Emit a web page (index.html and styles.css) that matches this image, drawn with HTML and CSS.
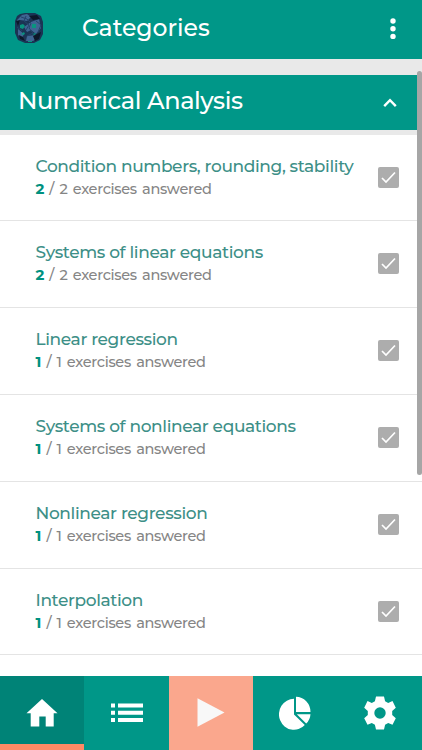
FILE: index.html
```html
<!DOCTYPE html>
<html lang="en">
  <head>
    <meta charset="UTF-8" />
    <meta name="viewport" content="width=device-width, initial-scale=1.0" />
    <title>Categories</title>
    <link rel="stylesheet" href="styles.css">
  </head>
  <body>
    <header class="topbar">
      <svg class="logo" viewBox="0 0 30 32">
        <path d="M6 2 L11 1 H21 L27 4 L29 10 V22 L26 28 L20 31 H11 L4 28 L1 21 V9 L3 4 Z" fill="#1b3454" />
        <path d="M8 3 L13 2 L17 5 L13 9 L6 8 L3 12 L3 8 Z M17 10 L25 7 L27 16 L22 22 L17 18 L13 20 L10 15 Z M4 17 L10 22 L8 26 L4 23 Z M13 24 L22 23 L24 26 L19 29 H12 Z" fill="#3f6592" />
        <path d="M15 4 L23 3 L26 7 L19 8 Z M5 23 L9 25 L11 29 L6 27 Z M19 24 L27 20 L25 27 L21 29 Z M2 9 L6 8 L4 14 Z" fill="#0c1829" />
        <path d="M6 13 L9 12 L11 14 L9 17 L6 16 Z M18 12 H22 V16 H18 Z M7 22 L10 20 L11 22 L9 23 Z M18 22 L22 21 L21 23 Z M14 29 H18 V30 H14 Z" fill="#08947f" />
        <path d="M7 5 L13 7 L17 11 L15 16 L19 21 L13 24 M12 4 L10 9 L15 13 L12 18 M3 15 L8 19 M22 9 L27 13 L24 20" fill="none" stroke="#24436a" stroke-width="1" />
      </svg>
      <h1>Categories</h1>
      <svg class="more" viewBox="0 0 6 22">
        <circle cx="3" cy="3" r="2.7" />
        <circle cx="3" cy="10.7" r="2.7" />
        <circle cx="3" cy="18.4" r="2.7" />
      </svg>
    </header>

    <main class="content">
      <div class="group-header">
        <h2>Numerical Analysis</h2>
        <svg class="chevron" viewBox="0 0 14 10">
          <path d="M1.2 8.2 L7 2.2 L12.8 8.2" />
        </svg>
      </div>
      <ul class="list">
        <li class="row">
          <div>
            <h3>Condition numbers, rounding, stability</h3>
            <p><b>2</b> / 2 exercises answered</p>
          </div>
          <svg class="check" viewBox="0 0 21 21"><path d="M4 11 L8 15 L17 5.5" /></svg>
        </li>
        <li class="row">
          <div>
            <h3>Systems of linear equations</h3>
            <p><b>2</b> / 2 exercises answered</p>
          </div>
          <svg class="check" viewBox="0 0 21 21"><path d="M4 11 L8 15 L17 5.5" /></svg>
        </li>
        <li class="row">
          <div>
            <h3>Linear regression</h3>
            <p><b>1</b> / 1 exercises answered</p>
          </div>
          <svg class="check" viewBox="0 0 21 21"><path d="M4 11 L8 15 L17 5.5" /></svg>
        </li>
        <li class="row">
          <div>
            <h3>Systems of nonlinear equations</h3>
            <p><b>1</b> / 1 exercises answered</p>
          </div>
          <svg class="check" viewBox="0 0 21 21"><path d="M4 11 L8 15 L17 5.5" /></svg>
        </li>
        <li class="row">
          <div>
            <h3>Nonlinear regression</h3>
            <p><b>1</b> / 1 exercises answered</p>
          </div>
          <svg class="check" viewBox="0 0 21 21"><path d="M4 11 L8 15 L17 5.5" /></svg>
        </li>
        <li class="row">
          <div>
            <h3>Interpolation</h3>
            <p><b>1</b> / 1 exercises answered</p>
          </div>
          <svg class="check" viewBox="0 0 21 21"><path d="M4 11 L8 15 L17 5.5" /></svg>
        </li>
      </ul>
      <div class="scrollbar"></div>
    </main>

    <nav class="tabs">
      <a class="tab active">
        <svg viewBox="0 0 32 34"><path d="M16 3 L31.5 17.2 H27.7 V30.5 H19.7 V20.5 H13.3 V30.5 H4.7 V17.2 H.5 Z" /></svg>
      </a>
      <a class="tab">
        <svg viewBox="0 0 32 34"><path d="M0 7.5h4v4H0z M7 7.5h25v4H7z M0 14.7h4v4H0z M7 14.7h25v4H7z M0 21.9h4v4H0z M7 21.9h25v4H7z" /></svg>
      </a>
      <a class="tab play">
        <svg viewBox="0 0 32 34"><path d="M2.5 2.3 L29.5 16.5 L2.5 30.7 Z" /></svg>
      </a>
      <a class="tab">
        <svg viewBox="0 0 32 34">
          <path d="M15 2.8 V18.5 L25.8 29 A15 15.5 0 1 1 15 2.8 Z M17 .7 A14.7 15.3 0 0 1 31.5 16 H17 Z M17.8 18.2 H31.5 A15 15 0 0 1 27.2 27.6 Z" />
        </svg>
      </a>
      <a class="tab">
        <svg viewBox="0 0 32 34">
          <path fill-rule="evenodd" d="M12 .5 H20 L21.1 5.2 L24.2 7 L28.5 5.1 L31.8 11.7 L28.2 15 V19 L31.8 22.3 L28.5 28.7 L24.2 27 L21.1 28.8 L20 33.5 H12 L10.9 28.8 L7.8 27 L3.5 28.7 L.2 22.3 L3.8 19 V15 L.2 11.7 L3.5 5.1 L7.8 7 L10.9 5.2 Z M16 11.3 A5.7 5.7 0 1 0 16 22.7 A5.7 5.7 0 1 0 16 11.3 Z" />
        </svg>
      </a>
    </nav>
  </body>
</html>
```

FILE: styles.css
```css
* {
  box-sizing: border-box;
  margin: 0;
  padding: 0;
}

body {
  height: 750px;
  display: flex;
  flex-direction: column;
  overflow: hidden;
  background: #fff;
  font-family: Montserrat, Inter, sans-serif;
}

svg {
  display: block;
}

.topbar {
  height: 59px;
  flex: none;
  display: flex;
  align-items: center;
  padding: 0 26px 4px 14px;
  background: #009788;
  color: #fff;
}

.logo {
  width: 30px;
  height: 32px;
}

.topbar h1 {
  flex: 1;
  margin-left: 38px;
  font-size: 23.5px;
  line-height: 32px;
  font-weight: 500;
}

.more {
  width: 6px;
  height: 22px;
  margin-top: 2px;
  fill: #fff;
}

.content {
  flex: 1;
  min-height: 0;
  overflow: hidden;
  position: relative;
  padding-top: 16px;
  background: #e9e9e9;
}

.group-header {
  height: 55px;
  display: flex;
  align-items: center;
  justify-content: space-between;
  padding: 0 25px 3px 18px;
  background: #009788;
  color: #fff;
}

.group-header h2 {
  font-size: 24px;
  line-height: 32px;
  font-weight: 500;
  letter-spacing: -0.43px;
}

.chevron {
  width: 14px;
  height: 10px;
  margin-top: 4px;
  fill: none;
  stroke: #fff;
  stroke-width: 2.4;
}

.list {
  height: 600px;
  margin-top: 4.6px;
  list-style: none;
  background: #fff;
}

.row {
  height: 86.8px;
  display: flex;
  align-items: flex-start;
  justify-content: space-between;
  padding: 20px 23px 0 35.5px;
  border-bottom: 1.5px solid #e4e4e4;
}

.row h3 {
  font-size: 17px;
  line-height: 23px;
  font-weight: 500;
  letter-spacing: -0.37px;
  color: #3d8f87;
  white-space: nowrap;
}

.row p {
  font-size: 14.5px;
  line-height: 22px;
  font-weight: 500;
  letter-spacing: -0.3px;
  word-spacing: 1.7px;
  color: #858585;
}

.row b {
  font-size: 15px;
  color: #00917f;
}

.check {
  flex: none;
  width: 21px;
  height: 21px;
  margin-top: 12px;
  border-radius: 2px;
  background: #adadad;
  fill: none;
  stroke: #fff;
  stroke-width: 1.7;
}

.scrollbar {
  position: absolute;
  top: 12px;
  right: 0;
  width: 5px;
  height: 404px;
  border-radius: 3px;
  background: #a6a6a6;
}

.tabs {
  flex: none;
  height: 74px;
  display: flex;
  background: #009788;
}

.tab {
  flex: 1;
  display: flex;
  justify-content: center;
  padding-top: 20px;
}

.tab svg {
  width: 32px;
  height: 34px;
  fill: #fff;
}

.tab.active {
  background: #008377;
  border-bottom: 6px solid #ff8a65;
}

.tab.play {
  background: #faa78d;
}

.tab.play svg {
  fill: #f8f8f8;
}
```
